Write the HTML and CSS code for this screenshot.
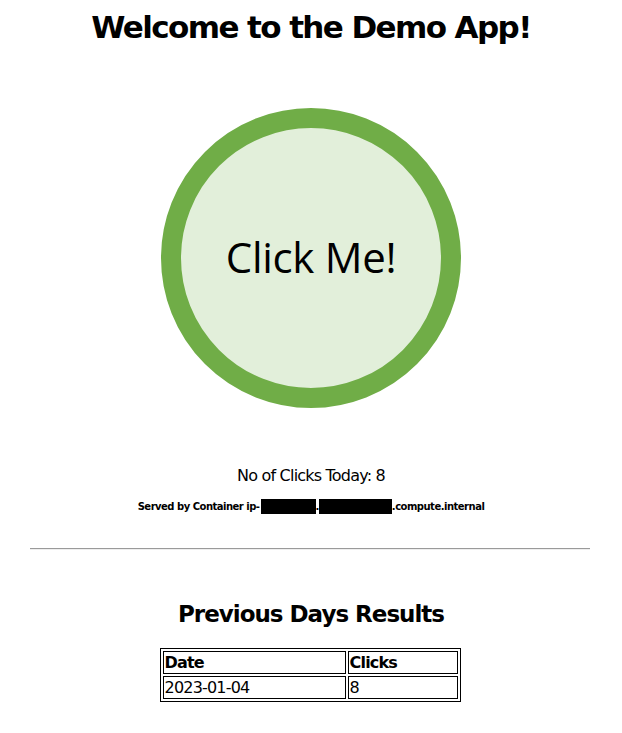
FILE: index.html
```html
<!DOCTYPE html>
<html>
<head>
<meta charset="utf-8">
<link rel="stylesheet" href="styles.css">
</head>
<body>
<div class="page">
  <h1 class="title">Welcome to the Demo App!</h1>
  <div class="btn-wrap">
    <button class="click-btn">Click Me!</button>
  </div>
  <p class="count">No of Clicks Today: 8</p>
  <p class="served">Served by Container ip-<span class="redact r1"></span>.<span class="redact r2"></span>.compute.internal</p>
  <hr class="divider">
  <h2 class="subtitle">Previous Days Results</h2>
  <table class="results">
    <tr><th class="c-date">Date</th><th class="c-clicks">Clicks</th></tr>
    <tr><td>2023-01-04</td><td>8</td></tr>
  </table>
</div>
</body>
</html>
```
FILE: styles.css
```css
html, body { margin: 0; padding: 0; background: #fff; }
body { font-family: "DejaVu Sans", Verdana, sans-serif; color: #000; }
.page { padding: 0 8px; display: flex; flex-direction: column; align-items: center; }
.title { font-size: 31px; font-weight: bold; margin: 9px 0 0; letter-spacing: -1.6px; line-height: 37px; }
.btn-wrap { margin-top: 62px; }
.click-btn {
  width: 300px; height: 300px; border-radius: 50%;
  border: 20px solid #70AD47; background: #E2EFDA;
  font-family: "Open Sans", sans-serif; font-size: 42px; color: #000;
  padding: 0 0 4px; display: flex; align-items: center; justify-content: center;
  letter-spacing: -0.3px;
}
.count { font-size: 16px; margin: 58px 0 0; letter-spacing: -0.8px; line-height: 20px; }
.served { font-size: 10px; font-weight: bold; margin: 13px 0 0; letter-spacing: -0.5px; line-height: 15px; display: flex; align-items: center; }
.redact { display: inline-block; background: #000; height: 15px; }
.r1 { width: 55px; margin-left: 1px; }
.r2 { width: 73px; }
.divider { align-self: stretch; margin: 34px 24px 0 22px; border: none; border-top: 1px solid #9a9a9a; border-bottom: 1px solid #eee; height: 0; }
.subtitle { font-size: 23px; font-weight: bold; margin: 50px 0 0; letter-spacing: -1px; line-height: 28px; }
.results { margin: 20px 2px 0 0; border: 1px solid #000; border-spacing: 2px; font-size: 16px; letter-spacing: -0.8px; }
.results th, .results td { border: 1px solid #000; padding: 1px; text-align: left; line-height: 19px; }
.c-date { width: 179px; }
.c-clicks { width: 106px; }
```
